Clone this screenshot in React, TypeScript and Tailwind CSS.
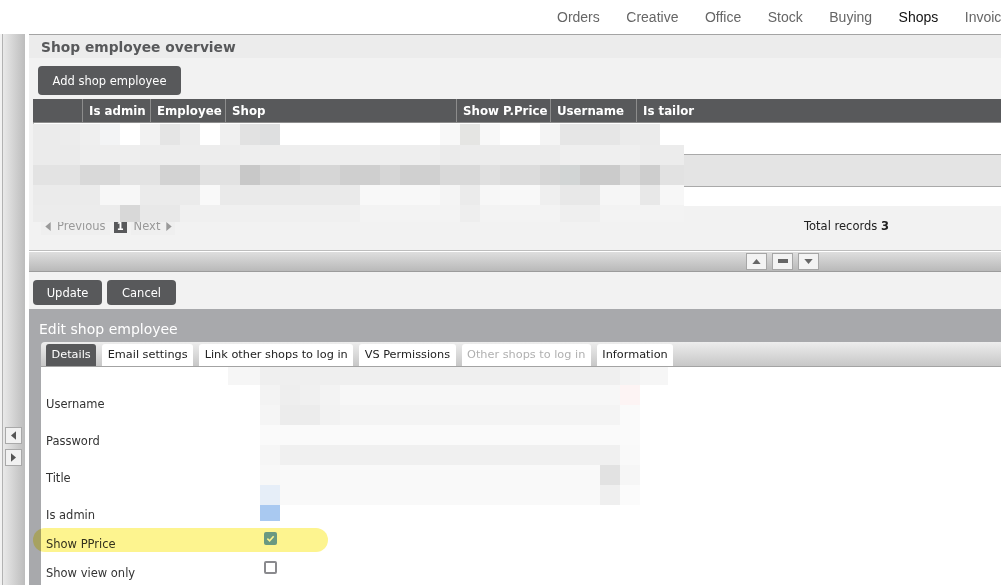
import React from "react"

type Seg = [number, number, string]
type MRow = { y: number; h: number; segs: Seg[] }

// pixelated (blurred) areas, page coordinates
const tableMosaic: MRow[] = [
  {
    y: 124, h: 21, segs: [
      [33, 60, "#ebebeb"], [60, 80, "#ececec"], [80, 100, "#efefef"], [100, 120, "#f3f4f5"], [120, 140, "#ffffff"],
      [140, 160, "#f2f2f2"], [160, 180, "#e5e5e5"], [180, 200, "#ececec"], [200, 220, "#ffffff"], [220, 240, "#f0f0f0"],
      [240, 260, "#e2e2e2"], [260, 280, "#dedfe0"], [280, 440, "#ffffff"], [440, 460, "#f8f8f8"], [460, 480, "#e5e5e3"],
      [480, 500, "#f8f8f8"], [500, 540, "#ffffff"], [540, 560, "#f4f4f4"], [560, 620, "#e6e6e6"], [620, 660, "#ebebeb"],
      [660, 684, "#ffffff"],
    ],
  },
  {
    y: 145, h: 20, segs: [
      [33, 80, "#ebebeb"], [80, 140, "#eeeeee"], [140, 240, "#ededed"], [240, 440, "#eeeeee"], [440, 460, "#ebebeb"],
      [460, 560, "#ececec"], [560, 640, "#efefef"], [640, 684, "#ececec"],
    ],
  },
  {
    y: 165, h: 20, segs: [
      [33, 80, "#e3e3e3"], [80, 120, "#d9d9d9"], [120, 160, "#e3e3e3"], [160, 200, "#d3d3d3"], [200, 240, "#e2e2e2"],
      [240, 260, "#c8c8c8"], [260, 300, "#d2d2d2"], [300, 340, "#d6d6d6"], [340, 380, "#cfcfcf"], [380, 400, "#d6d6d6"],
      [400, 440, "#d0d0d0"], [440, 480, "#d9d9d9"], [480, 500, "#e0e0e0"], [500, 540, "#dcdcdc"], [540, 560, "#d6d6d6"],
      [560, 580, "#d2d5d5"], [580, 620, "#cbcbcb"], [620, 640, "#d9d9d9"], [640, 660, "#cecece"], [660, 684, "#e2e2e2"],
    ],
  },
  {
    y: 185, h: 20, segs: [
      [33, 100, "#ebebeb"], [100, 140, "#f7f7f7"], [140, 200, "#ebebeb"], [200, 220, "#f9f9f9"], [220, 360, "#eaeaea"],
      [360, 440, "#f8f8f8"], [440, 460, "#f4f4f4"], [460, 480, "#ebebeb"], [480, 500, "#f7f7f7"], [500, 540, "#f8f8f8"],
      [540, 560, "#efefef"], [560, 600, "#e8e8e8"], [600, 640, "#f6f6f6"], [640, 660, "#e8e8e8"], [660, 684, "#f7f7f7"],
    ],
  },
  {
    y: 205, h: 17, segs: [
      [33, 120, "#ececec"], [120, 140, "#d8d8d8"], [140, 180, "#e8e8e8"], [180, 360, "#f0f0f0"], [360, 460, "#f3f3f3"],
      [460, 480, "#eeeeee"], [480, 560, "#f3f3f3"], [560, 600, "#efefef"], [600, 684, "#f3f3f3"],
    ],
  },
]

const formMosaic: MRow[] = [
  { y: 367, h: 18, segs: [[228, 260, "#f6f6f6"], [260, 620, "#efefef"], [620, 640, "#f3f3f3"], [640, 668, "#f6f6f6"]] },
  {
    y: 385, h: 20, segs: [
      [260, 280, "#f3f3f3"], [280, 300, "#eeeeee"], [300, 320, "#f0f0f0"], [320, 340, "#f3f3f3"], [340, 620, "#f7f7f7"],
      [620, 640, "#fdf4f4"],
    ],
  },
  { y: 405, h: 20, segs: [[260, 280, "#f5f5f5"], [280, 320, "#ececec"], [320, 340, "#f2f2f2"], [340, 620, "#f4f4f4"], [620, 640, "#fafafa"]] },
  { y: 425, h: 20, segs: [[260, 640, "#fafafa"]] },
  { y: 445, h: 20, segs: [[260, 280, "#f6f6f6"], [280, 620, "#f0f0f0"], [620, 640, "#f9f9f9"]] },
  { y: 465, h: 20, segs: [[260, 280, "#f8f8f8"], [280, 600, "#f9f9f9"], [600, 620, "#e2e2e2"], [620, 640, "#f6f6f6"]] },
  { y: 485, h: 20, segs: [[260, 280, "#e6eef8"], [280, 600, "#f9f9f9"], [600, 620, "#efefef"], [620, 640, "#fbfbfb"]] },
  { y: 505, h: 16, segs: [[260, 280, "#a9c9f1"]] },
]

// origin of the main column on the page
const OX = 29
const OY = 35

function Mosaic({ rows }: { rows: MRow[] }) {
  return (
    <>
      {rows.map((r) =>
        r.segs.map(([x0, x1, c]) => (
          <div
            key={`${r.y}-${x0}`}
            className="absolute"
            style={{ left: x0 - OX, top: r.y - OY, width: x1 - x0, height: r.h, background: c }}
          />
        ))
      )}
    </>
  )
}

const navItems = ["Orders", "Creative", "Office", "Stock", "Buying", "Shops", "Invoices"]

const columns = [
  { label: "", w: "w-[49px]" },
  { label: "Is admin", w: "w-[68px]" },
  { label: "Employee", w: "w-[75px]" },
  { label: "Shop", w: "w-[231px]" },
  { label: "Show P.Price", w: "w-[94px]" },
  { label: "Username", w: "w-[86px]" },
  { label: "Is tailor", w: "flex-1" },
]

const tabs = [
  { label: "Details", active: true },
  { label: "Email settings" },
  { label: "Link other shops to log in" },
  { label: "VS Permissions" },
  { label: "Other shops to log in", disabled: true },
  { label: "Information" },
]

function Tri({ dir, className }: { dir: "up" | "down" | "left" | "right"; className?: string }) {
  const pts = {
    up: "0,6 5,0 10,6",
    down: "0,0 10,0 5,6",
    left: "6,0 6,10 0,5",
    right: "0,0 6,5 0,10",
  }[dir]
  const vb = dir === "up" || dir === "down" ? "0 0 10 6" : "0 0 6 10"
  return (
    <svg viewBox={vb} className={className}>
      <polygon points={pts} fill="currentColor" />
    </svg>
  )
}

export default function App() {
  return (
    <div className="w-[1001px] h-[585px] overflow-hidden bg-white font-['DejaVu_Sans',sans-serif] text-[11.5px] text-[#333]">
      {/* top navigation */}
      <nav className="h-[34px] flex items-center gap-[26.5px] pl-[557px] whitespace-nowrap overflow-hidden font-['Liberation_Sans',Arial,sans-serif] text-[14px] text-[#666]">
        {navItems.map((n) => (
          <span key={n} className={n === "Shops" ? "text-[#111]" : ""}>{n}</span>
        ))}
      </nav>

      <div className="flex h-[551px]">
        {/* collapsed sidebar */}
        <aside className="w-[25px] shrink-0 flex flex-col items-center pl-[2px] pt-[393px] gap-[5px] bg-[linear-gradient(to_right,#f2f2f2_0,#f2f2f2_2px,#b2b2b2_2px,#b2b2b2_3px,#e9e9e9_3px,#bcbcbc_25px)]">
          <div className="w-[17px] h-[17px] border border-[#a9a9a9] bg-[#f1f1f1] flex items-center justify-center text-[#555]">
            <Tri dir="left" className="w-[5px] h-[9px]" />
          </div>
          <div className="w-[17px] h-[17px] border border-[#a9a9a9] bg-[#f1f1f1] flex items-center justify-center text-[#555]">
            <Tri dir="right" className="w-[5px] h-[9px]" />
          </div>
        </aside>

        <main className="relative ml-[4px] flex-1 min-w-0 flex flex-col border-t border-[#a4a4a4]">
          {/* overview */}
          <div className="h-[23px] shrink-0 bg-[#ececec] pl-[12px] pt-[1px] flex items-center font-bold text-[13.8px] text-[#58595b]">
            Shop employee overview
          </div>
          <div className="h-[41px] shrink-0 bg-[#f2f2f2] pl-[9px] pt-[8px]">
            <button className="w-[143px] h-[29px] pt-[2px] rounded-[4px] bg-[#58595b] text-white text-[11.5px]">Add shop employee</button>
          </div>

          <div className="bg-[#f2f2f2] pl-[4px] shrink-0">
            <div className="h-[24px] flex bg-[#58595b] text-white font-bold text-[11.8px] border-b border-[#8d8d8d]">
              {columns.map((c, i) => (
                <div
                  key={i}
                  className={`${c.w} h-full flex items-center pl-[6px] pt-[3px] ${i > 0 ? "border-l border-[#8c8c8c]" : ""}`}
                >
                  {c.label}
                </div>
              ))}
            </div>
            <div className="border-l border-[#bdbdbd]">
              <div className="h-[31px] bg-white" />
              <div className="h-[33px] bg-[#e4e4e4] border-y border-[#a9a9a9]" />
              <div className="h-[19px] bg-white" />
            </div>
          </div>

          {/* pager */}
          <div className="h-[44px] shrink-0 bg-[#f2f2f2]">
            <div className="h-[38px] pt-[3px] flex items-center">
              <div className="w-[775px] flex items-center pl-[12px] text-[#999]">
                <span className="flex items-center gap-[6px] bg-[#efefef] px-[4px]">
                  <Tri dir="left" className="w-[6px] h-[9px]" />
                  Previous
                </span>
                <span className="ml-[4px] w-[13px] h-[13px] bg-[#58595b] text-white text-[10px] font-bold flex items-center justify-center">1</span>
                <span className="ml-[4px] flex items-center gap-[6px] bg-[#efefef] px-[3px]">
                  Next
                  <Tri dir="right" className="w-[6px] h-[9px]" />
                </span>
              </div>
              <div className="text-[#222]">
                Total records <b>3</b>
              </div>
            </div>
          </div>

          {/* splitter */}
          <div className="h-[22px] shrink-0 border-t border-[#bdbdbd] border-b border-b-[#9c9c9c] bg-[linear-gradient(to_bottom,#ffffff_0,#ffffff_1px,#dedede_1px,#b9b9b9_100%)] flex items-center gap-[5px] pl-[717px]">
            <div className="w-[21px] h-[17px] border border-[#a6a6a6] bg-[#f3f3f3] flex items-center justify-center text-[#666]">
              <Tri dir="up" className="w-[9px] h-[5px]" />
            </div>
            <div className="w-[21px] h-[17px] border border-[#a6a6a6] bg-[#f3f3f3] flex items-center justify-center">
              <div className="w-[10px] h-[4px] bg-[#666]" />
            </div>
            <div className="w-[21px] h-[17px] border border-[#a6a6a6] bg-[#f3f3f3] flex items-center justify-center text-[#666]">
              <Tri dir="down" className="w-[9px] h-[5px]" />
            </div>
          </div>

          <div className="h-[37px] shrink-0 bg-[#f2f2f2] pl-[4px] pt-[8px] flex gap-[5px]">
            <button className="w-[69px] h-[25px] pt-[2px] rounded-[4px] bg-[#58595b] text-white text-[11.5px]">Update</button>
            <button className="w-[69px] h-[25px] pt-[2px] rounded-[4px] bg-[#58595b] text-white text-[11.5px]">Cancel</button>
          </div>

          {/* edit panel */}
          <div className="flex-1 flex flex-col bg-[#a8a9ac]">
            <div className="h-[33px] shrink-0 flex items-center pl-[10px] pt-[7px] text-[14px] text-white">Edit shop employee</div>
            <div className="ml-[12px] h-[25px] shrink-0 rounded-tl-[4px] bg-[linear-gradient(to_bottom,#ededed,#c7c7c7)] border-b border-[#a3a3a3] flex items-end gap-[6px] pl-[5px] text-[11.3px]">
              {tabs.map((t) => (
                <div
                  key={t.label}
                  className={`h-[22px] px-[5.5px] pt-[1px] flex items-center rounded-t-[3px] whitespace-nowrap ${
                    t.active ? "bg-[#58595b] text-white" : t.disabled ? "bg-white text-[#b0b0b0]" : "bg-white text-[#222]"
                  }`}
                >
                  {t.label}
                </div>
              ))}
            </div>
            <div className="ml-[12px] flex-1 bg-white pl-[5px] pt-[20px]">
              {[
                { label: "Username", h: "h-[36px]" },
                { label: "Password", h: "h-[37px]" },
                { label: "Title", h: "h-[37px]" },
                { label: "Is admin", h: "h-[37px]" },
              ].map((r) => (
                <div key={r.label} className={`${r.h} flex items-center`}>{r.label}</div>
              ))}
              <div className="h-[22px] flex items-center">
                <span className="w-[218px]">Show PPrice</span>
                <span className="-mt-[13px] w-[13px] h-[13px] rounded-[2px] bg-[#6ba0e6] flex items-center justify-center">
                  <svg viewBox="0 0 10 10" className="w-[9px] h-[9px]">
                    <path d="M1.5 5.2 L4 7.5 L8.5 2.5" stroke="#fff" strokeWidth="1.8" fill="none" />
                  </svg>
                </span>
              </div>
              <div className="h-[36px] flex items-center">
                <span className="w-[218px]">Show view only</span>
                <span className="-mt-[13px] w-[13px] h-[13px] rounded-[2px] border-2 border-[#8a8a8e] bg-white" />
              </div>
            </div>
          </div>

          <Mosaic rows={tableMosaic} />
          <Mosaic rows={formMosaic} />

          {/* highlighter mark */}
          <div className="absolute left-[4px] top-[493px] w-[295px] h-[24px] rounded-full bg-[#fdf48f] mix-blend-multiply" />
        </main>
      </div>
    </div>
  )
}
